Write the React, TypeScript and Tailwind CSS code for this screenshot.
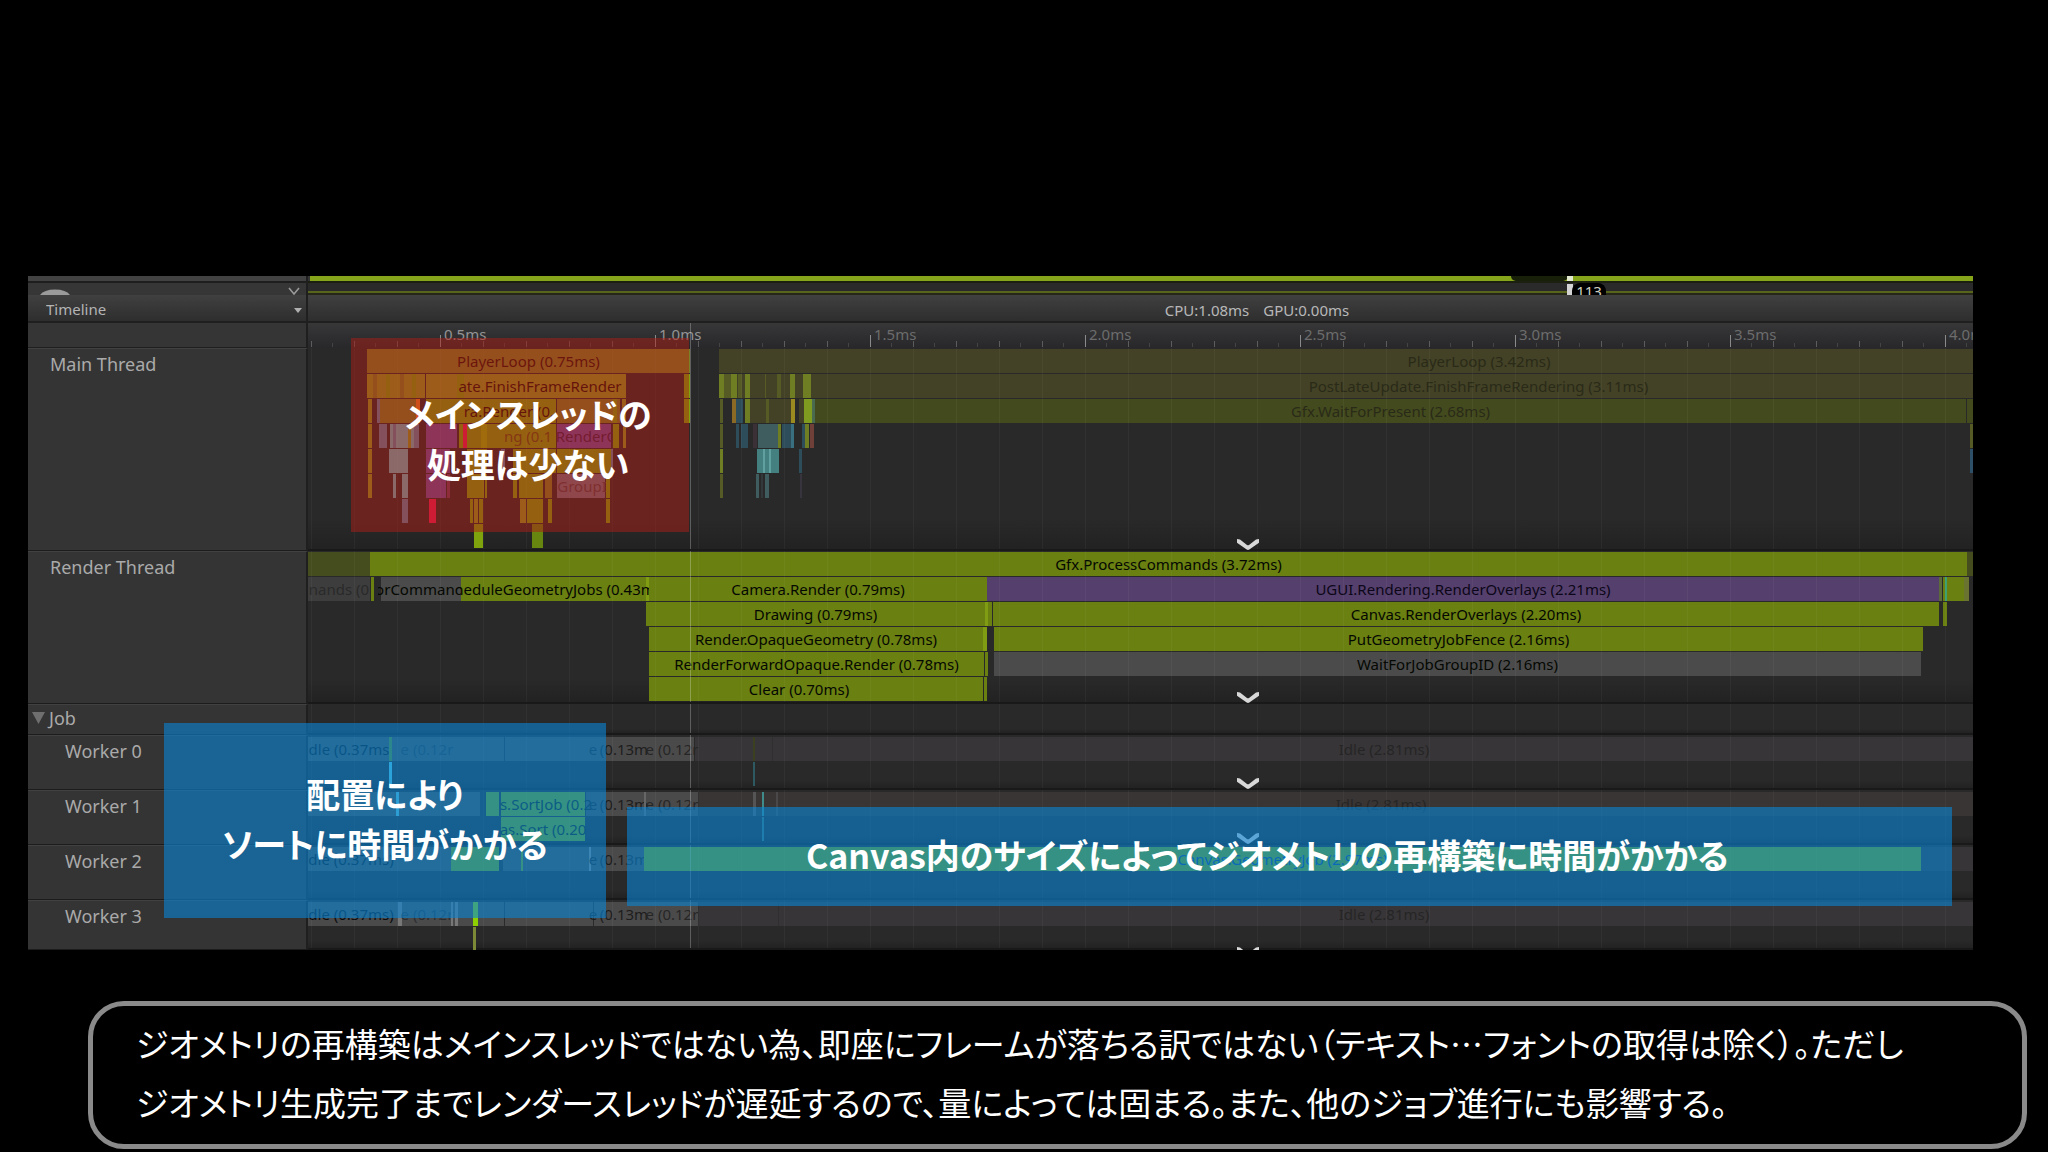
import React from "react";

/* Timeline units: 0 is the left edge of the track area, SPAN its right edge. */
const SPAN = 1665;
const pct = (v: number) => `${(v / SPAN) * 100}%`;

type Bar = { s: number; e: number; c: string; t?: string; tc?: string };
type Row = Bar[];

const OLIVE = "bg-[#434226]";
const GREEN = "bg-[#6a8011]";
const LIME = "bg-[#7f9c12]";
const GOLD = "bg-[#7fa30c]";
const AMBER = "bg-[#8f9a1e]";
const MOSS = "bg-[#7b8125]";
const TEAL = "bg-[#6bb5bd]";
const STEEL = "bg-[#5b83a0]";
const PURPLE = "bg-[#714b9d]";
const RED = "bg-[#f01b55]";
const DIMLIME = "bg-[#6f7d23]";
const DIMOLIVE = "bg-[#565a25]";
const DIMTEAL = "bg-[#3f5c5e]";
const DIMBLUE = "bg-[#2d4d5a]";
const IDLE = "bg-[#4b4a4a]";
const IDLEDIM = "bg-[#373537]";
const JOB = "bg-[#78a408]";
const INK = "text-[#050802]";
const FAINT = "text-[#2a2a18]";
const GHOST = "text-[#262526]";

const b = (s: number, e: number, c: string, t?: string, tc?: string): Bar => ({ s, e, c, t, tc });

const mainRows: Row[] = [
  [b(59, 382, MOSS, "PlayerLoop (0.75ms)", "text-[#2a0c04]"), b(411, 1931, OLIVE, "PlayerLoop (3.42ms)", FAINT)],
  [
    b(59, 117, AMBER), b(65, 69, MOSS), b(78, 82, GOLD), b(92, 96, MOSS), b(104, 108, GOLD),
    b(118, 318, AMBER), b(149, 156, GOLD), b(147, 317, "", "ate.FinishFrameRender", "text-[#1c0a02]"),
    b(376, 382, GOLD),
    b(411, 503, OLIVE), b(411, 416, DIMLIME), b(416, 423, DIMOLIVE), b(423, 429, DIMLIME), b(430, 434, DIMOLIVE),
    b(437, 442, DIMLIME), b(457, 458, DIMOLIVE), b(469, 473, DIMOLIVE), b(482, 487, DIMLIME), b(495, 503, DIMLIME),
    b(503, 1838, OLIVE, "PostLateUpdate.FinishFrameRendering (3.11ms)", FAINT),
  ],
  [
    b(60, 64, AMBER), b(69, 112, MOSS), b(69, 72, STEEL), b(108, 112, "bg-[#f08020]"),
    b(118, 248, GOLD), b(150, 252, "", "ra.Render (0.", "text-[#1c0a02]"), b(249, 312, MOSS), b(305, 309, GOLD), b(314, 318, AMBER),
    b(376, 382, GOLD),
    b(412, 415, DIMOLIVE), b(424, 428, "bg-[#8a6a24]"), b(428, 435, DIMBLUE), b(437, 442, DIMLIME),
    b(442, 483, OLIVE), b(458, 461, DIMOLIVE), b(483, 487, "bg-[#9a8a20]"), b(491, 496, OLIVE),
    b(496, 504, "bg-[#7f9c20]"), b(504, 507, "bg-[#4a6a50]"),
    b(507, 1658, "bg-[#434b1e]", "Gfx.WaitForPresent (2.68ms)", FAINT), b(1659, 1665, "bg-[#434b1e]"),
  ],
  [
    b(60, 64, AMBER), b(71, 79, STEEL), b(82, 111, TEAL), b(85, 88, STEEL), b(100, 103, AMBER), b(106, 111, STEEL),
    b(118, 149, PURPLE), b(151, 155, GOLD), b(155, 159, RED), b(159, 248, GOLD),
    b(173, 179, "bg-[#90b800]"), b(192, 248, "", "ng (0.1", "text-[#5a5010]"),
    b(249, 303, PURPLE), b(247, 311, "", "RenderO", "text-[#3a1a4a]"), b(305, 311, GOLD), b(315, 318, AMBER),
    b(412, 415, DIMOLIVE), b(428, 431, DIMBLUE), b(433, 440, DIMBLUE), b(445, 449, "bg-[#3a3036]"),
    b(450, 471, DIMTEAL), b(470, 473, DIMLIME), b(474, 483, DIMBLUE), b(483, 486, "bg-[#3a6f80]"),
    b(494, 497, DIMBLUE), b(497, 501, DIMLIME), b(502, 506, "bg-[#6f4038]"), b(1662, 1665, DIMOLIVE),
  ],
  [
    b(60, 64, AMBER), b(81, 100, TEAL), b(118, 142, PURPLE), b(159, 179, GOLD), b(193, 197, STEEL),
    b(205, 248, GOLD), b(249, 303, GOLD), b(303, 305, STEEL),
    b(412, 415, DIMLIME), b(449, 471, "bg-[#458080]"), b(455, 457, "bg-[#60a0a0]"), b(461, 463, "bg-[#60a0a0]"),
    b(491, 494, DIMBLUE), b(1662, 1665, "bg-[#2d5068]"),
  ],
  [
    b(60, 64, AMBER), b(85, 88, TEAL), b(94, 100, TEAL), b(118, 138, PURPLE), b(139, 142, "bg-[#713b5d]"),
    b(159, 176, GOLD), b(177, 179, GOLD), b(205, 209, GOLD), b(211, 235, GOLD), b(237, 244, MOSS),
    b(249, 297, "bg-[#707080]"), b(246, 302, "", "GroupI", "text-[#504048]"), b(298, 302, GOLD),
    b(412, 415, DIMOLIVE), b(448, 451, DIMTEAL), b(453, 455, "bg-[#33383a]"), b(457, 461, DIMTEAL), b(492, 494, "bg-[#38343e]"),
  ],
  [
    b(94, 100, STEEL), b(121, 128, RED), b(162, 165, GOLD), b(166, 170, AMBER), b(171, 175, GOLD),
    b(212, 218, AMBER), b(219, 235, GOLD), b(240, 244, GOLD), b(298, 302, GOLD),
  ],
  [b(166, 175, GOLD), b(224, 235, "bg-[#66860f]")],
];

const renderRows: Row[] = [
  [b(0, 62, "bg-[#454c1e]"), b(62, 1659, GREEN, "Gfx.ProcessCommands (3.72ms)", INK), b(1659, 1665, "bg-[#454c1e]")],
  [
    b(0, 62, "bg-[#3d3d3d]", "nands (0", "text-[#2a2a2a]"), b(63, 66, GREEN), b(73, 153, "bg-[#4b4b4b]"),
    b(153, 341, GREEN), b(338, 341, LIME),
    b(70, 153, "", "orCommand", INK), b(150, 343, "", "heduleGeometryJobs (0.43m", INK),
    b(341, 679, GREEN, "Camera.Render (0.79ms)", INK),
    b(679, 1631, "bg-[#55406d]", "UGUI.Rendering.RenderOverlays (2.21ms)", "text-[#0c0618]"),
    b(1631, 1634, "bg-[#5c6a3c]"), b(1635, 1656, GREEN), b(1637, 1639, "bg-[#3aa070]"), b(1656, 1661, "bg-[#6a7430]"),
  ],
  [
    b(338, 677, GREEN, "Drawing (0.79ms)", INK), b(677, 680, LIME), b(680, 684, GREEN),
    b(685, 1631, GREEN, "Canvas.RenderOverlays (2.20ms)", INK), b(1635, 1639, GREEN),
  ],
  [b(341, 675, GREEN, "Render.OpaqueGeometry (0.78ms)", INK), b(675, 679, LIME), b(686, 1615, GREEN, "PutGeometryJobFence (2.16ms)", INK)],
  [b(341, 676, GREEN, "RenderForwardOpaque.Render (0.78ms)", INK), b(677, 680, GREEN), b(686, 1613, "bg-[#4b4b4c]", "WaitForJobGroupID (2.16ms)", INK)],
  [b(341, 641, GREEN, "Clear (0.70ms)", INK), b(641, 675, GREEN), b(676, 679, GREEN)],
];

const TAIL: Bar[] = [
  b(278, 292, "", "e", "text-[#1d1d1d]"),
  b(292, 340, "", "(0.13m", "text-[#1d1d1d]"),
  b(336, 392, "", "e (0.12r", "text-[#262626]"),
];

const workers: { name: string; chevron: boolean; h: string; rows: Row[] }[] = [
  {
    name: "Worker 0", chevron: true, h: "h-[55px]",
    rows: [
      [
        b(0, 386, IDLE), b(0, 82, "", "dle (0.37ms", "text-[#0a0c10]"), b(81, 84, "bg-[#608a20]"),
        b(88, 150, "", "e (0.12r", "text-[#2c3034]"), b(196, 197, "bg-[#2a2a2a]"),
        b(387, 476, IDLEDIM), ...TAIL, b(445, 447, "bg-[#3a4020]"), b(464, 465, "bg-[#302f30]"),
        b(476, 1676, IDLEDIM, "Idle (2.81ms)", GHOST),
      ],
      [b(81, 84, "bg-[#60d0e0]"), b(445, 447, "bg-[#2d5a60]")],
    ],
  },
  {
    name: "Worker 1", chevron: true, h: "h-[55px]",
    rows: [
      [
        b(0, 172, IDLE), b(88, 91, "bg-[#60c0d0]"), b(178, 191, JOB), b(193, 277, JOB),
        b(278, 390, IDLE), b(191, 285, "", "s.SortJob (0.2", "text-[#101c10]"), b(391, 476, "bg-[#393535]"), ...TAIL,
        b(336, 338, "bg-[#666666]"),
        b(445, 448, "bg-[#555555]"), b(454, 456, "bg-[#3f8a8a]"), b(468, 470, "bg-[#4a4848]"),
        b(470, 1676, "bg-[#393535]", "Idle (2.81ms)", GHOST),
      ],
      [b(193, 277, JOB), b(190, 280, "", "as.Sort (0.20", "text-[#101c10]"), b(454, 456, "bg-[#407070]")],
    ],
  },
  {
    name: "Worker 2", chevron: false, h: "h-[55px]",
    rows: [
      [
        b(0, 143, IDLE), b(0, 86, "", "dle (0.37ms)", "text-[#0a0c10]"), b(143, 191, JOB), b(195, 336, IDLE),
        b(213, 215, JOB), b(281, 283, "bg-[#888888]"), TAIL[0], TAIL[1],
        b(336, 1613, JOB, "Canvas.GeometryJob (2.97ms)", "text-[#104090]"), b(1613, 1665, IDLEDIM),
      ],
      [],
    ],
  },
  {
    name: "Worker 3", chevron: false, h: "h-[50px]",
    rows: [
      [
        b(0, 390, IDLE), b(0, 86, "", "dle (0.37ms)", "text-[#0a0c10]"), b(90, 94, "bg-[#777777]"),
        b(92, 146, "", "e (0.12r", "text-[#2a2e32]"), b(143, 145, "bg-[#777777]"), b(147, 150, "bg-[#777777]"),
        b(165, 170, "bg-[#8fd000]"), b(196, 197, "bg-[#2a2a2a]"), b(285, 286, "bg-[#2a2a2a]"),
        b(391, 476, IDLEDIM), ...TAIL, b(470, 471, "bg-[#302f30]"), b(476, 1676, IDLEDIM, "Idle (2.81ms)", GHOST),
      ],
      [b(165, 168, "bg-[#7c8a38]")],
    ],
  },
];

const majors = [0.5, 1, 1.5, 2, 2.5, 3, 3.5, 4];
const ticks = Array.from({ length: 39 }, (_, i) => ({ x: 3 + i * 43, major: i % 5 === 3 }));
const msX = (ms: number) => 132 + (ms - 0.5) * 430;

function Tracks({ rows }: { rows: Row[] }) {
  return (
    <div className="flex flex-col gap-px">
      {rows.map((row, i) => (
        <div key={i} className="relative h-6 overflow-hidden">
          {row.map((bar, j) => (
            <div
              key={j}
              className={`absolute inset-y-0 flex items-center justify-center overflow-hidden whitespace-nowrap text-[15px] leading-[22px] ${bar.c} ${bar.tc ?? ""}`}
              style={{ left: pct(bar.s), width: pct(bar.e - bar.s) }}
            >
              {bar.t && <span>{bar.t}</span>}
            </div>
          ))}
        </div>
      ))}
    </div>
  );
}

function Grid() {
  return (
    <div className="pointer-events-none absolute inset-0">
      {ticks.map((t) => (
        <div key={t.x} className="absolute inset-y-0 w-px bg-white/4" style={{ left: pct(t.x) }} />
      ))}
      <div className="absolute inset-y-0 w-px bg-white/25" style={{ left: pct(382) }} />
    </div>
  );
}

function Chevron({ clipped }: { clipped?: boolean }) {
  return (
    <svg
      viewBox="0 0 22 11"
      className={`absolute h-[11px] w-[22px] -translate-x-1/2 ${clipped ? "-bottom-2.5" : "-bottom-px"}`}
      style={{ left: pct(940) }}
      fill="#d8d8d8"
    >
      <path d="M0 0 L3 0.5 L10 6 Q11 6.7 12 6 L19 0.5 L22 0 V3.8 L12.3 10.6 Q11 11.3 9.7 10.6 L0 3.8 Z" />
    </svg>
  );
}

function Lane({ label, height, pad, indent, chevron, clipped, rows }: {
  label: React.ReactNode; height: string; pad: string; indent: string; chevron?: boolean; clipped?: boolean; rows: Row[];
}) {
  return (
    <div className={`flex overflow-hidden ${height}`}>
      <div className={`w-[280px] shrink-0 border-t border-r-2 border-b border-t-[#414141] border-r-[#1f1f1f] border-b-[#1c1c1c] bg-[#343434] pt-[3px] text-lg leading-6 text-[#aaaaaa] ${indent}`}>
        {label}
      </div>
      <div className={`relative min-w-0 flex-1 border-b-2 border-[#191919] bg-linear-to-b from-[#29292a] from-85% to-[#222222] ${pad}`}>
        <Tracks rows={rows} />
        <Grid />
        {chevron && <Chevron clipped={clipped} />}
      </div>
    </div>
  );
}

function TopStrip() {
  return (
    <div className="flex h-[19px]">
      <div className="flex w-[280px] shrink-0 flex-col border-r-2 border-[#1f1f1f]">
        <div className="h-[5px] bg-[#424242]" />
        <div className="h-0.5 bg-[#1e1e1e]" />
        <div className="flex flex-1 items-end justify-between bg-[#363636] pr-1.5 pl-3">
          <svg viewBox="0 0 30 6" className="h-1.5 w-[30px]"><path d="M0 6 Q4 0.5 15 0.5 T30 6 Z" fill="#9a9a9a" /></svg>
          <svg viewBox="0 0 12 8" className="h-2 w-3" fill="none" stroke="#9a9a9a" strokeWidth="1.6"><path d="M1 1 L6 7 L11 1" /></svg>
        </div>
      </div>
      <div className="relative flex min-w-0 flex-1 flex-col overflow-hidden">
        <div className="ml-0.5 h-[5px] bg-[#86a51b]" />
        <div className="h-0.5 bg-[#1c2010]" />
        <div className="h-2 bg-[#2a2a2a]" />
        <div className="h-0.5 bg-[#57651c]" />
        <div className="h-0.5 bg-[#262719]" />
        <div className="absolute top-0 h-[5px] rounded-b-md bg-[#18200a]" style={{ left: pct(1203), width: pct(57) }} />
        <div className="absolute top-0 h-[5px] w-1.5 bg-[#e4ead0]" style={{ left: pct(1259) }} />
        <div className="absolute top-2 h-3 w-1.5 bg-[#d4d4d4]" style={{ left: pct(1259) }} />
        <div
          className="absolute top-[7px] h-5 rounded-t-lg bg-black text-center text-[15px] leading-[17px] text-[#d0d0c0]"
          style={{ left: pct(1264), width: pct(34) }}
        >
          113
        </div>
      </div>
    </div>
  );
}

function Toolbar() {
  return (
    <div className="flex h-7 border-b-2 border-[#1f1f1f] bg-linear-to-b from-[#404041] to-[#2e2e2f]">
      <div className="relative flex w-[280px] shrink-0 items-center border-r-2 border-[#1f1f1f]">
        <select aria-label="View" className="h-full w-full appearance-none bg-transparent pt-0.5 pl-[18px] text-[15px] text-[#b4b4b4] outline-none">
          <option>Timeline</option>
        </select>
        <svg viewBox="0 0 8 5" className="absolute right-1 bottom-2 h-[5px] w-2"><path d="M0 0 H8 L4 5 Z" fill="#b0b0b0" /></svg>
      </div>
      <div className="relative min-w-0 flex-1">
        <div
          className="absolute inset-y-0 flex -translate-x-1/2 items-center gap-3.5 pt-1 text-[15px] whitespace-nowrap text-[#b8b8b8]"
          style={{ left: pct(949) }}
        >
          <span>CPU:1.08ms</span>
          <span>GPU:0.00ms</span>
        </div>
      </div>
    </div>
  );
}

function Ruler() {
  return (
    <div className="flex h-[25px]">
      <div className="w-[280px] shrink-0 border-r-2 border-b border-r-[#1f1f1f] border-b-[#1f1f1f] bg-[#353535]" />
      <div className="relative min-w-0 flex-1 overflow-hidden bg-linear-to-b from-[#373738] to-[#28282b]">
        {ticks.map((t) => (
          <React.Fragment key={t.x}>
            <div
              className={`absolute bottom-px w-px ${t.major ? "h-3 bg-[#8a8a8a]" : "h-1.5 bg-[#5c5c5c]"}`}
              style={{ left: pct(t.x) }}
            />
            <div className="absolute bottom-px h-1 w-px bg-[#444444]" style={{ left: pct(t.x + 21) }} />
          </React.Fragment>
        ))}
        {majors.map((ms) => (
          <span
            key={ms}
            className={`absolute top-0.5 pl-1 text-[15px] leading-[18px] ${ms <= 1 ? "text-[#949494]" : "text-[#6c6c6c]"}`}
            style={{ left: pct(msX(ms)) }}
          >
            {ms.toFixed(1)}ms
          </span>
        ))}
        <div className="absolute inset-y-0 w-px bg-white/25" style={{ left: pct(382) }} />
      </div>
    </div>
  );
}

export default function App() {
  return (
    <main className="min-h-screen bg-black pt-[276px] font-['Noto_Sans','Noto_Sans_CJK_JP',sans-serif]">
      <section className="relative mr-[75px] ml-7 bg-[#343434]">
        <TopStrip />
        <Toolbar />
        <Ruler />
        <Lane label="Main Thread" height="h-[203px]" pad="pt-px" indent="pl-[22px]" chevron rows={mainRows} />
        <Lane label="Render Thread" height="h-[153px]" pad="pt-px" indent="pl-[22px]" chevron rows={renderRows} />
        <Lane
          label={
            <button className="-mt-0.5 flex h-6 items-center gap-1">
              <svg viewBox="0 0 13 12" className="h-3 w-[13px]"><path d="M0 0 H13 L6.5 12 Z" fill="#6f6f6f" /></svg>
              Job
            </button>
          }
          height="h-[31px]" pad="pt-0.5" indent="pl-1" rows={[]}
        />
        {workers.map((w, i) => (
          <Lane
            key={w.name} label={w.name} height={w.h} pad="pt-0.5" indent="pl-[37px]"
            chevron={w.chevron || i === 3} clipped={i === 3} rows={w.rows}
          />
        ))}

        <div className="absolute top-[62px] left-[16.6%] flex h-[194px] w-[17.4%] items-center justify-center bg-[#ad1d15]/50 pt-2 pl-4 text-center font-['Noto_Sans_CJK_JP',sans-serif] text-[34px] leading-[50px] font-bold whitespace-nowrap text-white [font-feature-settings:'palt']">
          <p>メインスレッドの<br />処理は少ない</p>
        </div>
        <div className="absolute top-[447px] left-[7%] flex h-[195px] w-[22.7%] items-center justify-center bg-[#0885d5]/60 pb-1 text-center font-['Noto_Sans_CJK_JP',sans-serif] text-[34px] leading-[50px] font-bold whitespace-nowrap text-white [font-feature-settings:'palt']">
          <p>配置により<br />ソートに時間がかかる</p>
        </div>
        <div className="absolute top-[531px] left-[30.8%] flex h-[99px] w-[68.1%] items-center justify-center bg-[#0885d5]/60 pr-11 pb-1 text-center font-['Noto_Sans_CJK_JP',sans-serif] text-[34px] leading-[50px] font-bold whitespace-nowrap text-white [font-feature-settings:'palt']">
          <p>Canvas内のサイズによってジオメトリの再構築に時間がかかる</p>
        </div>
      </section>

      <section className="mt-[51px] mr-[21px] ml-[88px] rounded-[36px] border-[5px] border-[#8a8a8a] pt-2 pb-3 pl-[43px] font-['Noto_Sans_CJK_JP',sans-serif] text-[33px] leading-[59px] text-white [font-feature-settings:'palt']">
        <p>
          ジオメトリの再構築はメインスレッドではない為、即座にフレームが落ちる訳ではない（テキスト…フォントの取得は除く）。ただし
          <br />
          ジオメトリ生成完了までレンダースレッドが遅延するので、量によっては固まる。また、他のジョブ進行にも影響する。
        </p>
      </section>
    </main>
  );
}
